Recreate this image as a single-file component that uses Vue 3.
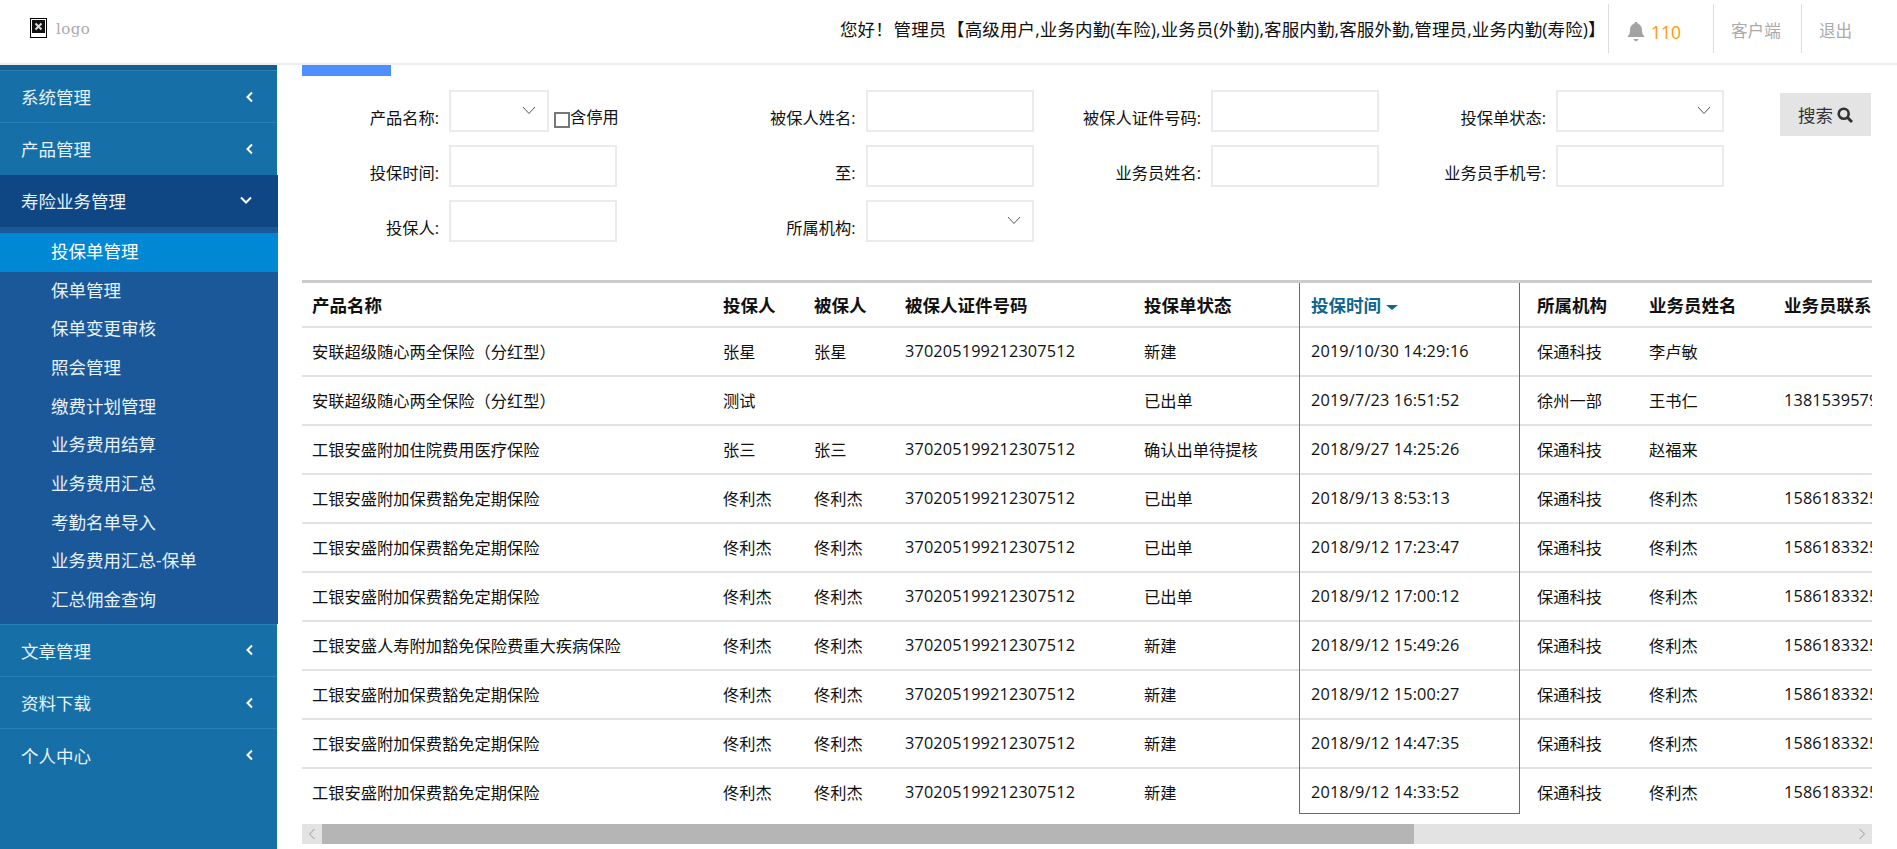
<script setup>
const topBefore = ['系统管理', '产品管理']
const subs = ['投保单管理', '保单管理', '保单变更审核', '照会管理', '缴费计划管理', '业务费用结算', '业务费用汇总', '考勤名单导入', '业务费用汇总-保单', '汇总佣金查询']
const topAfter = ['文章管理', '资料下载', '个人中心']
const id = '370205199212307512'
const p = '工银安盛附加保费豁免定期保险'
const tong = ['佟利杰', '佟利杰', id]
const m = '15861833258'
const rows = [
  ['安联超级随心两全保险（分红型）', '张星', '张星', id, '新建', '2019/10/30 14:29:16', '保通科技', '李卢敏', ''],
  ['安联超级随心两全保险（分红型）', '测试', '', '', '已出单', '2019/7/23 16:51:52', '徐州一部', '王书仁', '13815395795'],
  ['工银安盛附加住院费用医疗保险', '张三', '张三', id, '确认出单待提核', '2018/9/27 14:25:26', '保通科技', '赵福来', ''],
  [p, ...tong, '已出单', '2018/9/13 8:53:13', '保通科技', '佟利杰', m],
  [p, ...tong, '已出单', '2018/9/12 17:23:47', '保通科技', '佟利杰', m],
  [p, ...tong, '已出单', '2018/9/12 17:00:12', '保通科技', '佟利杰', m],
  ['工银安盛人寿附加豁免保险费重大疾病保险', ...tong, '新建', '2018/9/12 15:49:26', '保通科技', '佟利杰', m],
  [p, ...tong, '新建', '2018/9/12 15:00:27', '保通科技', '佟利杰', m],
  [p, ...tong, '新建', '2018/9/12 14:47:35', '保通科技', '佟利杰', m],
  [p, ...tong, '新建', '2018/9/12 14:33:52', '保通科技', '佟利杰', m]
]
const heads = ['产品名称', '投保人', '被保人', '被保人证件号码', '投保单状态', '投保时间', '所属机构', '业务员姓名', '业务员联系方式']
const widths = [411, 91, 91, 239, 167, 226, 112, 135, 200]
const numeric = [3, 5, 8]
</script>

<template>
  <div class="page">
    <header class="top">
      <div class="logo">
        <svg class="broken" width="18" height="21" viewBox="0 0 18 21">
          <rect x="0.5" y="0.5" width="16" height="19" fill="#fff" stroke="#000" />
          <rect x="2" y="2" width="13" height="13" fill="#111" />
          <path d="M5.5 5.5l6 6M11.5 5.5l-6 6" stroke="#ddd" stroke-width="2" />
        </svg>
        <span class="logo-text">logo</span>
      </div>
      <div class="greet">您好！ 管理员 【高级用户,业务内勤(车险),业务员(外勤),客服内勤,客服外勤,管理员,业务内勤(寿险)】</div>
      <div class="tool bell-tool">
        <svg width="18" height="20" viewBox="0 0 18 20">
          <path d="M9 0c1 0 1.6.7 1.7 1.6C13.600 2.400 15 5 15 8c0 3.500 1 5.500 3 7H0c2-1.500 3-3.500 3-7 0-3 1.400-5.600 4.300-6.400C7.400.7 8 0 9 0z" fill="#a3a3a3" />
          <path d="M6.500 17h5c-.3 1.300-1.300 2.200-2.500 2.200S6.800 18.300 6.500 17z" fill="#a3a3a3" />
        </svg>
        <span class="count">110</span>
      </div>
      <div class="tool link client">客户端</div>
      <div class="tool link quit">退出</div>
    </header>

    <div class="body">
      <aside class="side">
        <div v-for="t in topBefore" :key="t" class="nav">
          <span>{{ t }}</span>
          <svg width="9" height="12" viewBox="0 0 9 12"><path d="M7 1.500L2.500 6 7 10.500" fill="none" stroke="#fff" stroke-width="2" /></svg>
        </div>
        <div class="nav open">
          <span>寿险业务管理</span>
          <svg width="12" height="9" viewBox="0 0 12 9"><path d="M1 1.500L6 6.500 11 1.500" fill="none" stroke="#fff" stroke-width="2" /></svg>
        </div>
        <ul class="subs">
          <li v-for="(s, i) in subs" :key="s" :class="{ on: i === 0 }">{{ s }}</li>
        </ul>
        <div v-for="t in topAfter" :key="t" class="nav">
          <span>{{ t }}</span>
          <svg width="9" height="12" viewBox="0 0 9 12"><path d="M7 1.500L2.500 6 7 10.500" fill="none" stroke="#fff" stroke-width="2" /></svg>
        </div>
      </aside>

      <main class="main">
        <div class="tab"></div>
        <div class="filter">
          <div class="form">
            <div class="field">
              <label>产品名称:</label>
              <div class="ctl group">
                <div class="box sel short">
                  <svg class="chev" width="14" height="9" viewBox="0 0 14 9"><path d="M1 1l6 6.500L13 1" fill="none" stroke="#555" /></svg>
                </div>
                <span class="check"></span><span class="stop">含停用</span>
              </div>
            </div>
            <div class="field"><label>被保人姓名:</label><div class="ctl box"></div></div>
            <div class="field"><label>被保人证件号码:</label><div class="ctl box"></div></div>
            <div class="field">
              <label>投保单状态:</label>
              <div class="ctl box sel"><svg class="chev" width="14" height="9" viewBox="0 0 14 9"><path d="M1 1l6 6.500L13 1" fill="none" stroke="#555" /></svg></div>
            </div>
            <div class="field"><label>投保时间:</label><div class="ctl box"></div></div>
            <div class="field"><label>至:</label><div class="ctl box"></div></div>
            <div class="field"><label>业务员姓名:</label><div class="ctl box"></div></div>
            <div class="field"><label>业务员手机号:</label><div class="ctl box"></div></div>
            <div class="field"><label>投保人:</label><div class="ctl box"></div></div>
            <div class="field">
              <label>所属机构:</label>
              <div class="ctl box sel"><svg class="chev" width="14" height="9" viewBox="0 0 14 9"><path d="M1 1l6 6.500L13 1" fill="none" stroke="#555" /></svg></div>
            </div>
          </div>
          <button class="search">
            <span>搜索</span>
            <svg width="16" height="16" viewBox="0 0 16 16"><circle cx="6.700" cy="6.700" r="5" fill="none" stroke="#333" stroke-width="2.600" /><path d="M10.500 10.500L15 15" stroke="#333" stroke-width="3" /></svg>
          </button>
        </div>

        <div class="table-wrap">
          <table>
            <colgroup><col v-for="(w, i) in widths" :key="i" :style="{ width: w + 'px' }" /></colgroup>
            <thead>
              <tr>
                <th v-for="(h, i) in heads" :key="h" :class="{ sorted: i === 5 }">
                  {{ h }}<i v-if="i === 5" class="caret"></i>
                </th>
              </tr>
            </thead>
            <tbody>
              <tr v-for="(r, ri) in rows" :key="ri">
                <td v-for="(c, ci) in r" :key="ci" :class="{ num: numeric.includes(ci) }">{{ c }}</td>
              </tr>
            </tbody>
          </table>
          <div class="red"></div>
        </div>

        <div class="scroll">
          <span class="arrow"><svg width="8" height="12" viewBox="0 0 8 12"><path d="M6.500 1L1.500 6l5 5" fill="none" stroke="#999" /></svg></span>
          <span class="thumb"></span>
          <span class="rest"></span>
          <span class="arrow"><svg width="8" height="12" viewBox="0 0 8 12"><path d="M1.500 1l5 5-5 5" fill="none" stroke="#999" /></svg></span>
        </div>
      </main>
    </div>
  </div>
</template>

<style>
html, body { margin: 0; overflow: hidden; background: #fff; }
</style>

<style scoped>
.page {
  width: 1897px;
  height: 849px;
  display: flex;
  flex-direction: column;
  overflow: hidden;
  font-family: "Open Sans", "Noto Sans CJK SC", sans-serif;
  color: #111;
  font-size: 16.250px;
}
.top {
  flex: none;
  height: 63px;
  display: flex;
  align-items: flex-start;
  background: #fff;
  border-bottom: 2px solid #eee;
  position: relative;
  z-index: 2;
}
.logo {
  display: flex;
  align-items: center;
  gap: 8px;
  margin: 18px 0 0 30px;
}
.logo-text { font-family: "DejaVu Serif", serif; font-size: 15px; color: #aaa; letter-spacing: .4px; }
.greet {
  margin-left: auto;
  margin-top: 15px;
  font-size: 17.500px;
  line-height: 28px;
  letter-spacing: .12px;
  word-spacing: -4px;
  white-space: nowrap;
  width: 768px;
  color: #111;
}
.tool {
  height: 49px;
  margin-top: 4px;
  border-left: 1px solid #ddd;
  display: flex;
  align-items: center;
  box-sizing: border-box;
}
.bell-tool { width: 105px; padding: 6px 0 0 18px; gap: 6px; }
.count { color: #f90; font-size: 17.500px; }
.link { color: #aaa; font-size: 16.600px; padding-left: 17px; padding-top: 2px; }
.client { width: 88px; }
.quit { width: 96px; }
.body { flex: 1; display: flex; min-height: 0; }
.side {
  flex: none;
  width: 277px;
  background: #1670a7;
  border-top: 5px solid #11618f;
  box-sizing: border-box;
  color: #e6f2fa;
  font-size: 17.500px;
}
.nav {
  height: 52.300px;
  box-sizing: border-box;
  border-top: 1px solid #2a80b5;
  display: flex;
  align-items: center;
  justify-content: space-between;
  padding: 0 23px 0 21px;
}
.nav.open {
  background: #0f4785;
  width: 278px;
  border-top-color: #0f4785;
  padding: 0 26px 1px 21px;
}
.subs {
  list-style: none;
  margin: 0;
  padding: 6px 0 4px;
  width: 278px;
  background: #1b5899;
}
.subs li {
  height: 38.700px;
  line-height: 37px;
  padding-left: 51px;
}
.subs li.on { background: #0088d4; color: #fff; }
.main { flex: 1; min-width: 0; padding: 0 25px 0 25px; }
.tab { width: 89px; height: 11px; background: #4d8fff; }
.filter { display: flex; height: 204px; padding-top: 14px; box-sizing: border-box; }
.form {
  width: 1422px;
  display: grid;
  grid-template-columns: 315px 416.500px 345.500px 345px;
  grid-auto-rows: 42px;
  row-gap: 13px;
}
.field { display: flex; align-items: stretch; }
.field label {
  flex: 1;
  text-align: right;
  margin-right: 10px;
  padding-top: 14px;
  line-height: 28px;
  white-space: nowrap;
}
.ctl { width: 168px; flex: none; box-sizing: border-box; }
.box { border: 2px solid #ebebeb; box-sizing: border-box; position: relative; }
.group { display: flex; align-items: flex-start; }
.short { width: 100px; height: 42px; flex: none; }
.chev { position: absolute; right: 11px; top: 14px; }
.check {
  flex: none;
  width: 16px;
  height: 16px;
  box-sizing: border-box;
  border: 2px solid #777;
  margin: 22px 0 0 5px;
}
.stop { margin-top: 13px; line-height: 28px; white-space: nowrap; }
.search {
  width: 91px;
  height: 43px;
  margin: 3px 0 0 56px;
  padding: 0;
  border: 0;
  background: #e4e4e4;
  color: #333;
  font: inherit;
  font-size: 17.500px;
  display: flex;
  align-items: center;
  justify-content: center;
  gap: 4px;
}
.table-wrap { position: relative; height: 541px; overflow: hidden; border-top: 3px solid #ccc; }
table { border-collapse: collapse; table-layout: fixed; width: 1672px; }
th {
  height: 44px;
  padding: 0 0 0 10px;
  text-align: left;
  font-size: 17.500px;
  font-weight: 700;
  white-space: nowrap;
  border-bottom: 2px solid #e2e2e2;
  box-sizing: border-box;
}
td {
  height: 49px;
  padding: 0 0 2px 10px;
  font-size: 16.250px;
  white-space: nowrap;
  border-bottom: 2px solid #e2e2e2;
  box-sizing: border-box;
  overflow: hidden;
}
td.num { letter-spacing: .16px; }
tbody tr:last-child td { border-bottom: 0; }
.sorted { color: #11668f; }
.caret {
  display: inline-block;
  margin-left: 5px;
  vertical-align: middle;
  border-left: 6px solid transparent;
  border-right: 6px solid transparent;
  border-top: 5px solid #11668f;
}
.red {
  position: absolute;
  left: 997px;
  top: -2px;
  width: 221px;
  height: 533px;
  box-sizing: border-box;
  border: 1px solid #f03038;
}
.scroll {
  height: 20px;
  display: flex;
  background: #e3e3e3;
}
.arrow { width: 20px; flex: none; display: flex; align-items: center; justify-content: center; }
.thumb { width: 1092px; background: #b5b5b5; }
.rest { flex: 1; }
</style>
